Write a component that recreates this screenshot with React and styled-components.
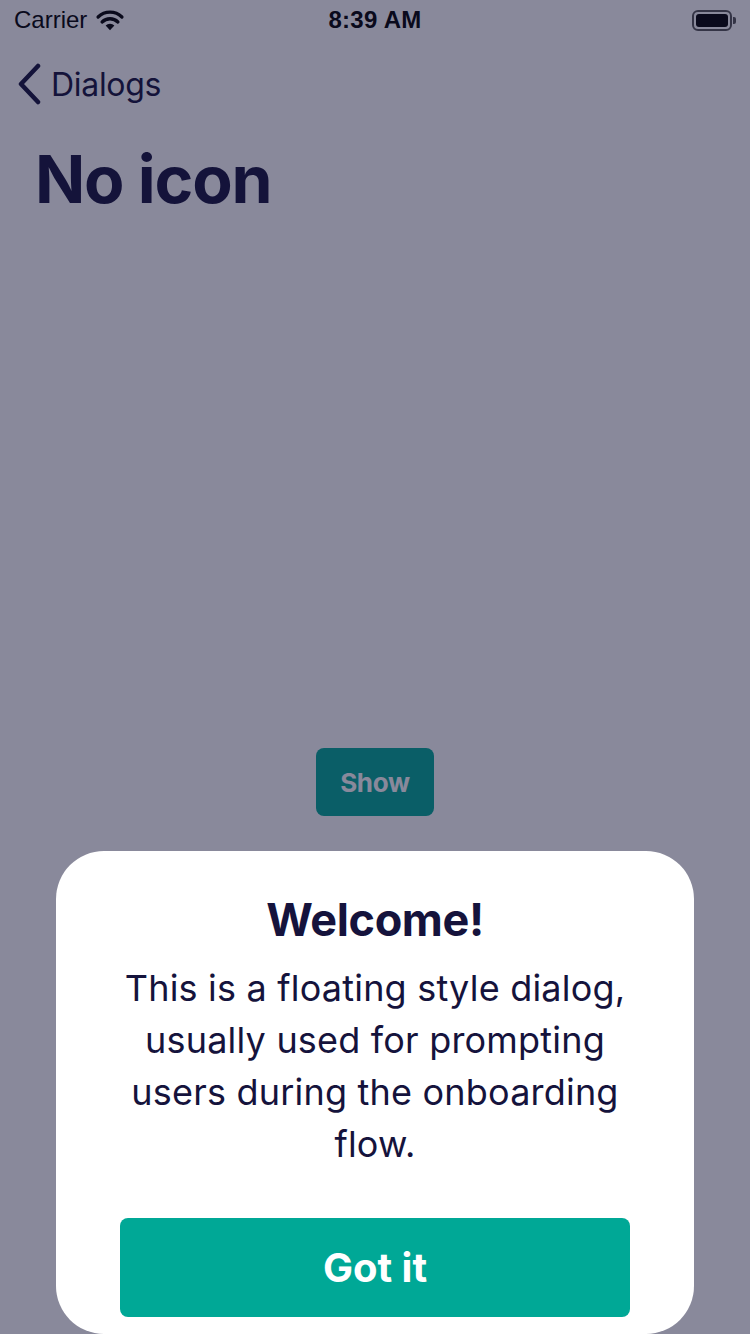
import React from "react";
import styled, { createGlobalStyle } from "styled-components";

const navy = "#15133c";
const teal = "#00a896";

const GlobalStyle = createGlobalStyle`
  html, body, #root {
    margin: 0;
    height: 100%;
  }
  body {
    font-family: Inter, "Noto Sans", sans-serif;
    background: #ffffff;
    overflow: hidden;
  }
`;

const Screen = styled.div`
  position: relative;
  width: 750px;
  height: 1334px;
  display: flex;
  flex-direction: column;
  overflow: hidden;
  background: #ffffff;
`;

const StatusBar = styled.div`
  height: 40px;
  display: grid;
  grid-template-columns: 1fr auto 1fr;
  align-items: center;
  padding: 0 14px;
  font-family: "Liberation Sans", Arial, sans-serif;
  font-size: 24px;
  color: #000;
`;

const Carrier = styled.div`
  display: flex;
  align-items: center;
  gap: 8px;
`;

const Clock = styled.div`
  font-weight: 700;
  letter-spacing: 0.3px;
`;

const Battery = styled.div`
  justify-self: end;
  display: flex;
  align-items: center;
`;

const BatteryBody = styled.div`
  width: 40px;
  height: 21px;
  box-sizing: border-box;
  border: 2px solid #555;
  border-radius: 6px;
  padding: 2px;
  display: flex;

  &::before {
    content: "";
    flex: 1;
    background: #000;
    border-radius: 3px;
  }
`;

const BatteryNub = styled.div`
  width: 3px;
  height: 7px;
  background: #555;
  border-radius: 0 2px 2px 0;
  margin-left: 1px;
`;

const NavBar = styled.div`
  height: 88px;
  display: flex;
  align-items: center;
  padding: 0 16px;
  gap: 9px;
  color: ${navy};
  font-size: 32px;
  letter-spacing: -0.3px;
`;

const Title = styled.h1`
  margin: 0;
  padding: 0 35px;
  height: 102px;
  display: flex;
  align-items: center;
  font-size: 66px;
  font-weight: 700;
  letter-spacing: -1.2px;
  color: ${navy};
`;

const Content = styled.div`
  flex: 1;
  display: flex;
  align-items: center;
  justify-content: center;
`;

const Button = styled.button`
  border: none;
  border-radius: 8px;
  background: ${teal};
  color: #ffffff;
  font-family: inherit;
  font-weight: 700;
  cursor: pointer;
  width: ${(p) => (p.$block ? "100%" : "auto")};
  height: ${(p) => (p.$block ? "99px" : "68px")};
  padding: ${(p) => (p.$block ? "0" : "0 24px")};
  font-size: ${(p) => (p.$block ? "40px" : "26px")};
  letter-spacing: ${(p) => (p.$block ? "0" : "-0.3px")};
`;

const Overlay = styled.div`
  position: absolute;
  inset: 0;
  background: rgba(20, 19, 56, 0.5);
  display: flex;
  align-items: flex-end;
  justify-content: center;
`;

const Dialog = styled.div`
  width: 638px;
  box-sizing: border-box;
  background: #ffffff;
  border-radius: 48px;
  padding: 43px 60px 17px;
  display: flex;
  flex-direction: column;
  align-items: center;
  text-align: center;
  color: ${navy};
`;

const DialogTitle = styled.h2`
  margin: 0;
  font-size: 45px;
  line-height: 52px;
  font-weight: 700;
  letter-spacing: -0.4px;
`;

const DialogText = styled.p`
  margin: 16px 0 48px;
  font-size: 36px;
  line-height: 52px;
  letter-spacing: 0.2px;
`;

const DialogAction = styled.div`
  align-self: stretch;
  padding: 0 4px;
  display: flex;
`;

const Wifi = () => (
  <svg width="30" height="22" viewBox="0 0 22 17">
    <path d="M11 16.5 L7.6 12.8 A5 5 0 0 1 14.4 12.8 Z" fill="#000" />
    <path d="M4.9 10 A8.8 8.8 0 0 1 17.1 10" stroke="#000" strokeWidth="2.6" fill="none" strokeLinecap="round" />
    <path d="M1.8 6.2 A13.2 13.2 0 0 1 20.2 6.2" stroke="#000" strokeWidth="2.6" fill="none" strokeLinecap="round" />
  </svg>
);

const Chevron = () => (
  <svg width="26" height="42" viewBox="0 0 26 42">
    <path d="M22 3 L5 21 L22 39" stroke={navy} strokeWidth="4.5" fill="none" strokeLinecap="round" strokeLinejoin="round" />
  </svg>
);

export default function App() {
  return (
    <Screen>
      <GlobalStyle />
      <StatusBar>
        <Carrier>
          Carrier <Wifi />
        </Carrier>
        <Clock>8:39 AM</Clock>
        <Battery>
          <BatteryBody />
          <BatteryNub />
        </Battery>
      </StatusBar>
      <NavBar>
        <Chevron />
        Dialogs
      </NavBar>
      <Title>No icon</Title>
      <Content>
        <Button>Show</Button>
      </Content>
      <Overlay>
        <Dialog>
          <DialogTitle>Welcome!</DialogTitle>
          <DialogText>
            This is a floating style dialog, usually used for prompting users
            during the onboarding flow.
          </DialogText>
          <DialogAction>
            <Button $block>Got it</Button>
          </DialogAction>
        </Dialog>
      </Overlay>
    </Screen>
  );
}
